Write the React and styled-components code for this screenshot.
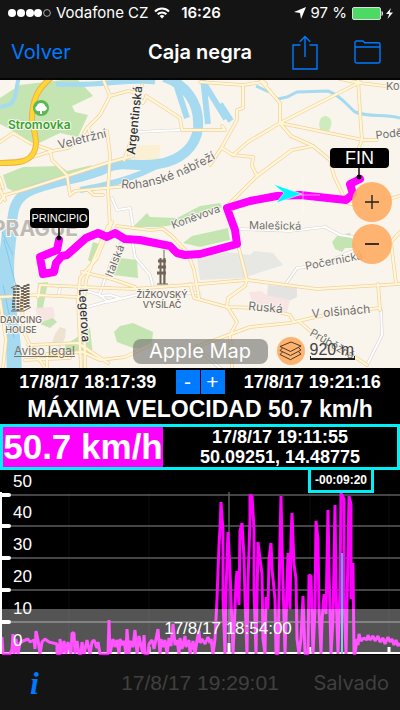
import React from 'react';
import styled, { createGlobalStyle } from 'styled-components';

const GlobalStyle = createGlobalStyle`
  * {
    box-sizing: border-box;
  }

  body {
    margin: 0;
    background: #141414;
    font-family: 'Liberation Sans', Arial, sans-serif;
    color: #fff;
  }

  button {
    border: 0;
    padding: 0;
    background: none;
    font: inherit;
    color: inherit;
  }

  svg {
    display: block;
  }
`;

const Page = styled.div`
  display: flex;
  flex-direction: column;
  min-height: 100vh;
  background: #141414;
`;

const StatusBar = styled.div`
  display: grid;
  grid-template-columns: 1fr auto 1fr;
  align-items: center;
  height: 26px;
  padding: 0 6px 0 8px;
  font-family: Inter, sans-serif;
  font-size: 15px;
  line-height: 26px;
  white-space: nowrap;
`;

const StatusGroup = styled.div`
  display: flex;
  align-items: center;
  justify-content: ${props => (props.$end ? 'flex-end' : 'flex-start')};
  gap: 5px;
`;

const Clock = styled.span`
  font-weight: 600;
`;

const NavBar = styled.header`
  display: grid;
  grid-template-columns: 1fr auto 1fr;
  align-items: center;
  height: 54px;
  padding: 0 11px;
  border-bottom: 2px solid #050505;
  font-family: Inter, sans-serif;
`;

const Title = styled.h1`
  margin: 0;
  font-size: 20px;
  line-height: 24px;
  font-weight: 600;
`;

const BackButton = styled.button`
  justify-self: start;
  color: #007aff;
  font-size: 20px;
  line-height: 24px;
`;

const NavActions = styled.div`
  display: flex;
  align-items: center;
  justify-content: flex-end;
  gap: 36px;
  padding-right: 8px;
`;

const MapArea = styled.section`
  position: relative;
  overflow: hidden;
  background: #f9f5ed;

  > svg {
    width: 100%;
    height: auto;
  }
`;

const Pin = styled.div`
  position: absolute;
  left: ${props => props.$x}%;
  top: ${props => props.$y}%;
  width: 59px;
  border-radius: 4px;
  background: #000;
  color: #fff;
  font-size: ${props => (props.$small ? 11 : 18)}px;
  line-height: 20px;
  text-align: center;
`;

const MapControls = styled.div`
  position: absolute;
  top: 102px;
  right: 8px;
  display: flex;
  flex-direction: column;
  gap: 2px;
`;

const RoundButton = styled.button`
  display: grid;
  place-items: center;
  width: ${props => props.$size}px;
  height: ${props => props.$size}px;
  border-radius: 50%;
  background: rgba(255, 172, 98, 0.9);
`;

const MapFooter = styled.div`
  position: absolute;
  left: 0;
  right: 0;
  bottom: 3px;
  display: grid;
  grid-template-columns: 1fr auto 1fr;
  align-items: center;
`;

const LegalLink = styled.a`
  justify-self: start;
  margin-left: 14px;
  color: #77746e;
  font-family: Inter, sans-serif;
  font-size: 12px;
  line-height: 24px;
`;

const MapType = styled.button`
  width: 135px;
  border-radius: 8px;
  background: rgba(120, 120, 115, 0.65);
  font-family: Inter, sans-serif;
  font-size: 20px;
  line-height: 25px;
`;

const MapTools = styled.div`
  display: flex;
  align-items: center;
  gap: 5px;
  padding-left: 9px;
`;

const Scale = styled.span`
  position: relative;
  width: 45px;
  border-bottom: 2px solid #222;
  color: #444;
  font-size: 16px;
  line-height: 16px;
  white-space: nowrap;

  &::after {
    content: '';
    position: absolute;
    left: 0;
    right: 0;
    bottom: 0;
    height: 2px;
    border: solid #222;
    border-width: 0 1px;
  }
`;

const Panel = styled.section`
  background: #000;
  font-weight: 700;
  text-align: center;
`;

const RangeRow = styled.div`
  display: grid;
  grid-template-columns: 1fr auto 1fr;
  align-items: center;
  height: 27px;
  font-size: 18px;
  line-height: 24px;
`;

const Stepper = styled.div`
  display: flex;
  gap: 1px;
`;

const StepButton = styled.button`
  width: 24px;
  height: 24px;
  background: #007aff;
  color: #fff;
  font-size: 21px;
  font-weight: 400;
  line-height: 24px;
`;

const Headline = styled.h2`
  margin: 0;
  font-size: 23px;
  line-height: 29px;
`;

const Current = styled.div`
  display: flex;
  border: 3px solid #00f0f5;
`;

const Speed = styled.div`
  width: 160px;
  background: #ff00ff;
  font-size: 35px;
  line-height: 40px;
  white-space: nowrap;
`;

const Details = styled.div`
  flex: 1;
  font-size: 18px;
  line-height: 20px;
`;

const ChartArea = styled.section`
  position: relative;
  background: #000;

  > svg {
    width: 100%;
    height: auto;
  }
`;

const TimeOffset = styled.div`
  position: absolute;
  top: -3px;
  left: 77%;
  width: 66px;
  border: 3px solid #00f0f5;
  background: #000;
  font-size: 12px;
  font-weight: 700;
  line-height: 20px;
  text-align: center;
`;

const Toolbar = styled.footer`
  display: grid;
  grid-template-columns: 1fr auto 1fr;
  align-items: center;
  flex: 1;
  min-height: 54px;
  padding: 0 11px;
  font-family: Inter, sans-serif;
  font-size: 20px;
  line-height: 24px;
  color: #404040;
`;

const SavedTime = styled.time`
  font-family: 'Liberation Sans', Arial, sans-serif;
  font-size: 21px;
`;

const InfoButton = styled.button`
  justify-self: start;
  padding-left: 19px;
  color: #007aff;
  font-family: 'Liberation Serif', serif;
  font-size: 32px;
  font-style: italic;
  font-weight: 700;
  line-height: 32px;
`;

const SavedButton = styled.button`
  justify-self: end;
`;

const parks = [
  '0,98 20,85 63,80 78,80 93,96 72,106 75,112 88,115 78,137 60,133 35,145 17,133 0,124',
  '3,175 23,167 60,166 67,171 92,165 80,175 40,187 13,191 7,188',
  '133,227 147,213 150,217 177,218 200,206 220,203 222,207 190,222 160,227',
  '183,243 192,236 228,228 230,240 200,247',
  '332,242 337,236 350,233 356,248 345,248 342,252 335,249',
  '113,275 120,258 137,260 138,278',
  '114,332 120,326 133,323 153,332 152,342 140,348 133,348 117,342',
  '38,283 48,282 43,308 37,308',
  '88,260 93,242 102,245 92,263',
  '65,345 76,338 90,327 93,357 66,352',
  '38,323 50,315 57,322 50,328',
];

const blocks = [
  { fill: '#e7e7e4', points: '197,258 227,252 250,255 254,251 273,253 283,265 243,278 200,280' },
  { fill: '#e3e3e2', points: '268,285 297,288 297,297 287,302 267,297' },
  { fill: '#f8e4e2', points: '249,292 262,291 266,295 290,300 287,312 253,305' },
  { fill: '#f8e4e2', points: '35,308 53,307 55,317 40,323' },
  { fill: '#eee3d2', points: '55,334 60,327 66,329 65,338 60,348 52,343' },
  { fill: '#fbf0d3', points: '134,145 160,145 159,160 134,160' },
];

const roads = [
  'M103 79L110 96L128 91L137 93L143 103L146 97',
  'M110 96L100 115L87 128L80 140L68 148L52 151L23 160L0 162',
  'M88 127L90 134',
  'M50 150L52 160L67 175L70 195L75 191L105 188L130 186',
  'M88 190L94 195L103 195',
  'M0 142L13 133L30 143L50 150',
  'M107 131L110 155L108 190L110 228',
  'M0 202L5 195L20 191L67 176L107 163L133 156',
  'M0 190L5 200M0 178L3 188',
  'M124 160L132 138L142 85',
  'M146 96L180 118L182 130L225 130L222 126',
  'M200 82L243 85L262 82L280 103L280 123L291 136L313 146L330 160L334 176L343 195',
  'M243 85L243 108L237 110L237 120L222 147L210 165',
  'M260 79L266 84',
  'M360 82L333 96L280 123L248 142L233 155L222 148',
  'M280 123L363 140L377 140',
  'M358 79L360 112L362 140L357 152',
  'M340 79L360 83L385 86L400 85',
  'M313 146L292 150L257 176L225 208',
  'M233 155L253 157L252 166L257 176',
  'M347 203L360 206L400 196',
  'M117 226L150 230L163 229L172 236L188 253L194 270L199 298',
  'M40 285L83 287L133 289L200 284L247 280L317 289L400 284',
  'M0 297L37 295L77 297M40 285L38 297',
  'M112 222L97 258L80 278L78 300L81 368',
  'M108 226L93 261L86 280L84 300L85 368',
  'M82 272L112 279L135 287',
  'M0 300L6 340L3 368M22 300L23 330L30 345L45 368',
  'M47 368L47 354L83 352L100 360L125 357L150 345',
  'M28 345L78 343L108 363M25 360L70 358',
  'M190 284L194 298L227 307L262 308L290 315L294 322',
  'M238 245L247 280L245 286L228 298L227 306L237 322L230 335L232 368',
  'M190 349L250 327L290 323L333 313L380 308',
  'M300 322L330 348L355 357L367 365',
  'M378 284L380 310',
  'M396 284L391 242L400 232',
];

const lanes = [
  'M381 310L382 335L367 365',
  'M285 285L297 268L320 265L355 250',
  'M240 229L290 231L325 227L340 235L372 240',
  'M132 238L135 257L150 275L153 287',
  'M83 290L100 295L108 302L140 294L200 293M87 307L120 298L110 295L100 296',
  'M100 293L110 265L123 240',
  'M112 198L117 210L130 208L133 226',
  'M137 132L180 130M60 289L58 296',
  'M205 355L214 363L220 368',
];

const route =
  'M59 240L57 250L40 257L43 274L54 272L56 263L62 256L67 255L86 238L98 233L107 237L115 233L125 239L140 240L170 246L177 253L185 255L200 254L237 244L235 230L227 208L250 201L277 196L300 195L346 200L353 194L350 184L360 179';

const labels = [
  { x: 59, y: 149, angle: -14, size: 12, text: 'Veletržní' },
  { x: 135, y: 155, angle: -84, size: 12, text: 'Argentinská', dark: true },
  { x: 173, y: 229, angle: -20, size: 11, text: 'Koněvova' },
  { x: 249, y: 229, angle: 1, size: 11, text: 'Malešická' },
  { x: 112, y: 278, angle: -68, size: 11, text: 'Italská' },
  { x: 79, y: 289, angle: 87, size: 12, text: 'Legerova', dark: true },
  { x: 248, y: 310, angle: 5, size: 12, text: 'Ruská' },
  { x: 306, y: 270, angle: -11, size: 11, text: 'Počernická' },
  { x: 312, y: 318, angle: -5, size: 12, text: 'V olšinách' },
  { x: 309, y: 335, angle: 30, size: 11, text: 'Průběžná' },
  { x: 386, y: 90, angle: 0, size: 11, text: 'Ko' },
  { x: 376, y: 139, angle: -6, size: 11, text: 'Podě' },
];

const gridLines = [
  { y: 496, value: 50 },
  { y: 527, value: 40 },
  { y: 559, value: 30 },
  { y: 591, value: 20 },
  { y: 623, value: 10 },
];

const idle =
  '0,648 2,638 3,655 10,655 12,650 13,635 14,655 16,640 18,655 20,644 23,642 28,640 30,643 34,641 35,650 36,632 38,641 40,655 42,643 45,640 49,643 57,645 57,655 60,655 60,640 62,655 64,642 66,655 68,643 71,655 72,634 74,634 75,655 77,642 79,655 81,655 82,643 84,655 87,641 90,655 92,643 94,641 97,649 98,643 100,655 108,655 109,621 110,655 113,640 115,648 117,641 119,655 120,640 122,646 124,642 126,655 127,630 129,655 130,642 133,648 135,631 137,655 139,637 141,647 143,655 144,636 145,655 148,655 149,645 152,641 154,650 156,640 158,630 160,655 161,640 163,648 165,641 167,655 169,639 171,647 173,625 175,646 177,641 179,655 180,639 182,650 185,637 186,648 189,641 190,655 193,642 195,655 197,641 199,632 200,644 202,640 205,645 208,638 210,644';

const peaks =
  '211,640 213,655 215,640 217,600 219,546 220,530 221,503 223,532 223,600 225,655 226,594 228,533 230,572 231,600 233,655 235,610 236,583 237,572 239,606 240,532 242,524 244,558 245,600 247,655 248,583 250,520 250,496 252,497 254,530 254,590 256,655 257,600 258,543 260,560 262,575 263,640 265,655 266,598 268,610 269,560 271,544 272,570 275,600 276,655 278,655 280,540 281,497 282,545 284,620 285,655 287,590 288,554 290,610 291,540 292,514 294,565 296,580 297,640 299,655 301,640 303,597 305,655 308,655 309,576 311,577 313,655 315,610 316,522 318,540 319,610 321,655 322,622 324,595 326,615 328,511 329,570 331,655 333,620 335,506 336,590 338,655 340,590 341,494 344,500 344,600 346,655 348,555 349,497 351,505 351,600 353,564 354,655';

const cruise =
  '355,655 357,640 358,646 359,635 361,642 364,639 367,641 368,636 370,641 373,637 375,642 378,637 380,643 383,639 385,645 388,638 390,643 392,640 394,646 396,641 398,647 400,644';

const SignalDots = () => (
  <svg width="43" height="10" viewBox="0 0 43 10" aria-hidden="true">
    {[4, 13, 22, 30].map(x => (
      <circle key={x} cx={x} cy="5" r="4" fill="#fff" />
    ))}
    <circle cx="39" cy="5" r="3.4" fill="none" stroke="#aaa" />
  </svg>
);

const WifiIcon = () => (
  <svg width="16" height="12" viewBox="0 0 16 12" fill="none" stroke="#fff" strokeWidth="2" aria-hidden="true">
    <path d="M1 4.5C5 .5 11 .5 15 4.5M3.6 7.2C6.1 4.8 9.9 4.8 12.4 7.2" />
    <path d="M8 11.5L5.6 9C7 7.8 9 7.8 10.4 9z" fill="#fff" stroke="none" />
  </svg>
);

const LocationIcon = () => (
  <svg width="12" height="12" viewBox="0 0 12 12" aria-hidden="true">
    <path d="M12 0L7 12L6 6L0 5z" fill="#fff" />
  </svg>
);

const BatteryIcon = () => (
  <svg width="42" height="13" viewBox="0 0 42 13" aria-hidden="true">
    <rect x=".5" y=".5" width="28" height="12" rx="1.5" fill="#4cd964" stroke="#ddd" />
    <path d="M29.5 4C31.5 4 31.5 9 29.5 9z" fill="#ddd" />
    <path d="M39 1L34 7H37.2L35.5 12L41 5.6H37.6z" fill="#fff" />
  </svg>
);

const ShareIcon = () => (
  <svg width="26" height="35" viewBox="0 0 26 35" fill="none" stroke="#007aff" strokeWidth="1.4" aria-hidden="true">
    <path d="M8.5 10H1V34H25V10H17.5M13 22V1.5M7.8 6.8L13 1.5L18.2 6.8" />
  </svg>
);

const FolderIcon = () => (
  <svg width="27" height="24" viewBox="0 0 27 24" fill="none" stroke="#007aff" strokeWidth="1.4" aria-hidden="true">
    <path d="M1 7V2.5Q1 1 2.5 1H8.5Q9.5 1 10 2L10.5 2.8H24.5Q26 2.8 26 4.3V21Q26 23 24 23H3Q1 23 1 21V7H26" />
  </svg>
);

const LayersIcon = () => (
  <svg width="23" height="20" viewBox="0 0 23 20" fill="none" stroke="#3a2a1a" strokeWidth=".9" aria-hidden="true">
    <path d="M1 5.5L12 1L22 5L11.5 10.5zM3.5 7L1 9.5L11.5 14.5L22 9L19.5 6.7M3.5 11L1 13.5L11.5 18.7L22 13L19.5 10.8" />
  </svg>
);

const CityMap = () => (
  <svg viewBox="0 80 400 288" role="img" aria-label="Mapa de Praga">
    <rect y="79" width="400" height="289" fill="#f9f5ed" />
    {parks.map(points => (
      <polygon key={points} points={points} fill="#c4e5b2" />
    ))}
    <path d="M320 130C318 122 320 116 326 116C332 118 333 123 329 131z" fill="#cdebbd" />
    {blocks.map(block => (
      <polygon key={block.points} points={block.points} fill={block.fill} />
    ))}

    {/* Vltava and its side channels */}
    <g fill="none" stroke="#a6daf0">
      <path d="M20 75C15 85 18 102 8 105L0 107" strokeWidth="4" />
      <path d="M56 84C100 87 130 78 155 82" strokeWidth="5" />
      <path d="M164 77C185 84 200 102 198 128C196 147 180 161 158 164C138 168 122 160 106 168C87 179 50 180 26 193C12 202 13 216 11 230" strokeWidth="10" />
      <path d="M11 224C7 245 5 270 8 300C10 325 15 340 14 370" strokeWidth="15" />
      <path d="M80 190C100 187 135 179 160 164" strokeWidth="6" />
      <path d="M174 78L187 118" strokeWidth="6" />
      <path d="M203 78L208 124M202 80L226 119M220 104L231 121" strokeWidth="6" />
      <path d="M256 86L269 92M278 99L287 97L297 92L328 91C340 95 347 105 355 112C370 118 383 113 400 118" strokeWidth="3" />
    </g>
    <path d="M4 240L17 290M3 285L14 338M2 232L13 255" stroke="#81c9ea" fill="none" />

    <g fill="none" strokeLinejoin="round" strokeLinecap="round">
      {lanes.map(d => (
        <path key={d} d={d} stroke="#d7d5d3" strokeWidth="3.2" />
      ))}
      {lanes.map(d => (
        <path key={d} d={d} stroke="#fff" strokeWidth="2" />
      ))}
      {roads.map(d => (
        <path key={d} d={d} stroke="#f4cf9f" strokeWidth="3.6" />
      ))}
      {roads.map(d => (
        <path key={d} d={d} stroke="#fff8d6" strokeWidth="2.2" />
      ))}
      <path d="M52 77C38 88 31 100 32 124C35 132 38 145 34 152C29 162 20 163 0 163" stroke="#eeb04a" strokeWidth="6" />
      <path d="M52 77C38 88 31 100 32 124C35 132 38 145 34 152C29 162 20 163 0 163" stroke="#ffd633" strokeWidth="4" />
    </g>

    <circle cx="41" cy="108" r="8" fill="#5cb854" />
    <path d="M40 114V111C35 112 34 107 37 106C37 102 45 102 45 106C49 108 46 112 42 111V114z" fill="#fff" />

    {/* Žižkov tower */}
    <g stroke="#716558" fill="none">
      <path d="M164 250V284" />
      <path d="M160.5 258V284M164.5 258V284" strokeWidth="2" />
      <path d="M158 261H166M158 267H166M157 273H166" strokeWidth="3" />
      <path d="M157 284H168" />
    </g>
    {/* Dancing House */}
    <g stroke="#716558" fill="none">
      <path d="M14 288C16 295 12 302 14 310M18 285V311M22 287C24 295 20 303 22 310M25 285V309M28 284V307" strokeWidth="3" strokeDasharray="2 1" />
      <path d="M11 288L17 285L22 288L29 284M11 311H24L31 307" />
    </g>

    <g fontFamily="Inter, 'Noto Sans', sans-serif" stroke="#fbf8f2" strokeWidth="2" paintOrder="stroke" strokeLinejoin="round">
      <text x="-8" y="236" fontSize="21" fontWeight="700" fill="#bdbab5">PRAGUE</text>
      <text x="8" y="129" fontSize="12" fontWeight="600" fill="#35a42b">Stromovka</text>
      {labels.map(label => (
        <text
          key={label.text}
          transform={`translate(${label.x} ${label.y}) rotate(${label.angle})`}
          fontSize={label.size}
          fontWeight={label.dark ? 500 : 400}
          fill={label.dark ? '#333' : '#706e6b'}
        >
          {label.text}
        </text>
      ))}
      <path id="embankment" d="M121 188C150 192 190 174 222 155" fill="none" stroke="none" />
      <text fontSize="12" fill="#706e6b">
        <textPath href="#embankment">Rohanské nábřeží</textPath>
      </text>
      <g fontSize="9" fontWeight="500" fill="#6f675e" textAnchor="middle">
        <text x="162" y="298">ŽIŽKOVSKÝ</text>
        <text x="162" y="308">VYSÍLAČ</text>
        <text x="21" y="323">DANCING</text>
        <text x="21" y="333">HOUSE</text>
      </g>
    </g>

    <path d={route} fill="none" stroke="#f0f" strokeWidth="8" strokeLinejoin="round" strokeLinecap="round" />
    <path d="M303 177V212M285 195H320" stroke="#fff" strokeOpacity=".5" />
    <polygon points="273,184 302,194 276,203 284,193" fill="#00f5ff" stroke="#fff" strokeWidth=".6" />
    <g stroke="#000" fill="#000">
      <path d="M59 226V238M359 166V177" strokeWidth="1.4" />
      <circle cx="59" cy="238" r="2" />
      <circle cx="359" cy="177" r="2" />
    </g>
  </svg>
);

const SpeedChart = () => (
  <svg viewBox="0 471 400 185" role="img" aria-label="Velocidad">
    <path d="M69 493V655M149 493V655M310 493V655M389 493V655" stroke="#0c0c0c" />
    {gridLines.map(line => (
      <path key={line.value} d={`M0 ${line.y}H400`} stroke="#5c5c5c" strokeWidth="1.5" />
    ))}
    <path d="M229 493V655" stroke="#5c5c5c" strokeWidth="1.5" />
    <path d="M0 654H400" stroke="#fff" strokeWidth="2" />
    <path d="M69 648V655M149 648V655M229 644V655M310 648V655M389 648V655" stroke="#fff" strokeWidth="3" />
    <polyline points={`${idle} ${peaks} ${cruise}`} fill="none" stroke="#f0f" strokeWidth="3" strokeLinejoin="bevel" />
    <path d="M342 554V655" stroke="#3dbec8" strokeWidth="2" />
    <rect y="610" width="400" height="45" fill="#fff" fillOpacity=".33" />
    <path d="M1 493V655" stroke="#fff" strokeWidth="2" />
    {gridLines.map(line => (
      <path key={line.value} d={`M1 ${line.y}H9`} stroke="#fff" strokeWidth="4" strokeLinecap="round" />
    ))}
    <g fill="#fff" fontFamily="'Liberation Sans', Arial, sans-serif" fontSize="17">
      {gridLines.map(line => (
        <text key={line.value} x="13" y={line.y - 8}>{line.value}</text>
      ))}
      <text x="13" y="647">0</text>
      <text x="228" y="635" textAnchor="middle">17/8/17 18:54:00</text>
    </g>
  </svg>
);

const App = () => {
  return (
    <>
      <GlobalStyle />
      <Page>
        <StatusBar>
          <StatusGroup>
            <SignalDots />
            <span>Vodafone CZ</span>
            <WifiIcon />
          </StatusGroup>
          <Clock>16:26</Clock>
          <StatusGroup $end>
            <LocationIcon />
            <span>97 %</span>
            <BatteryIcon />
          </StatusGroup>
        </StatusBar>

        <NavBar>
          <BackButton type="button">Volver</BackButton>
          <Title>Caja negra</Title>
          <NavActions>
            <button type="button" aria-label="Compartir"><ShareIcon /></button>
            <button type="button" aria-label="Archivos"><FolderIcon /></button>
          </NavActions>
        </NavBar>

        <MapArea>
          <CityMap />
          <Pin $x={7.5} $y={44.5} $small>PRINCIPIO</Pin>
          <Pin $x={82.5} $y={23.5}>FIN</Pin>
          <MapControls>
            <RoundButton type="button" $size={40} aria-label="Acercar">
              <svg width="16" height="16" viewBox="0 0 16 16" stroke="#222" strokeWidth="1.4">
                <path d="M8 1V15M1 8H15" />
              </svg>
            </RoundButton>
            <RoundButton type="button" $size={40} aria-label="Alejar">
              <svg width="16" height="16" viewBox="0 0 16 16" stroke="#222" strokeWidth="1.8">
                <path d="M1 8H15" />
              </svg>
            </RoundButton>
          </MapControls>
          <MapFooter>
            <LegalLink href="#legal">Aviso legal</LegalLink>
            <MapType type="button">Apple Map</MapType>
            <MapTools>
              <RoundButton type="button" $size={28} aria-label="Capas"><LayersIcon /></RoundButton>
              <Scale>920 m</Scale>
            </MapTools>
          </MapFooter>
        </MapArea>

        <Panel>
          <RangeRow>
            <span>17/8/17 18:17:39</span>
            <Stepper>
              <StepButton type="button">-</StepButton>
              <StepButton type="button">+</StepButton>
            </Stepper>
            <span>17/8/17 19:21:16</span>
          </RangeRow>
          <Headline>MÁXIMA VELOCIDAD 50.7 km/h</Headline>
          <Current>
            <Speed>50.7 km/h</Speed>
            <Details>
              <div>17/8/17 19:11:55</div>
              <div>50.09251, 14.48775</div>
            </Details>
          </Current>
        </Panel>

        <ChartArea>
          <SpeedChart />
          <TimeOffset>-00:09:20</TimeOffset>
        </ChartArea>

        <Toolbar>
          <InfoButton type="button" aria-label="Información">i</InfoButton>
          <SavedTime>17/8/17 19:29:01</SavedTime>
          <SavedButton type="button" disabled>Salvado</SavedButton>
        </Toolbar>
      </Page>
    </>
  );
};

export default App;
